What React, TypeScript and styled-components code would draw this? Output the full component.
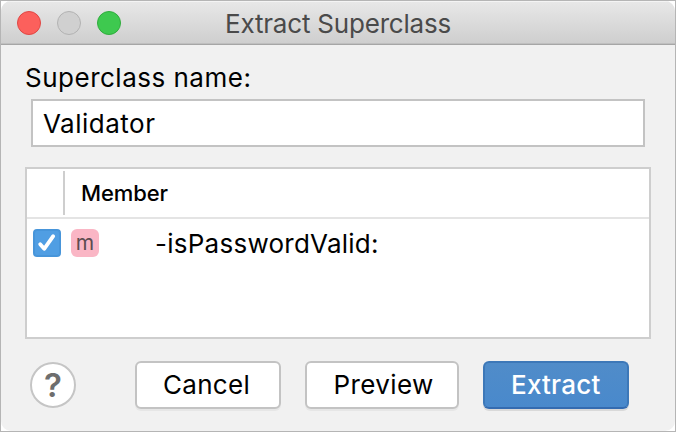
import React from "react";
import styled, { createGlobalStyle } from "styled-components";

const GlobalStyle = createGlobalStyle`
  * { box-sizing: border-box; }
  html, body { margin: 0; background: #fff; }
  body { font-family: Inter, "Liberation Sans", sans-serif; color: #000; font-size: 26px; }
`;

const Frame = styled.div`
  width: 676px;
  height: 432px;
  border: 1px solid #b5b5b5;
  background: #fff;
  overflow: hidden;
`;

const Dialog = styled.main`
  height: 430px;
  border-radius: 10px;
  background: #f1f1f1;
  overflow: hidden;
`;

const TitleBar = styled.header`
  height: 44px;
  display: grid;
  grid-template-columns: 224px 1fr;
  background: linear-gradient(#e8e8e8, #cecece);
  border-bottom: 1px solid #a6a6a6;
  box-shadow: inset 0 1px #f4f4f4, inset 0 -1px #bfbfbf;
`;

const Lights = styled.div`
  display: flex;
  gap: 16px;
  padding: 10px 0 0 16px;
`;

const Light = styled.span<{ $fill: string; $edge: string }>`
  width: 24px;
  height: 24px;
  border-radius: 50%;
  background: ${(p) => p.$fill};
  border: 1px solid ${(p) => p.$edge};
`;

const Title = styled.h1`
  margin: 0;
  font-size: 26px;
  font-weight: 400;
  line-height: 45px;
  letter-spacing: -0.2px;
  color: #4a4a4a;
  white-space: nowrap;
`;

const Label = styled.label`
  display: block;
  height: 54px;
  padding: 17px 0 0 24px;
  line-height: 32px;
  letter-spacing: 0.5px;
`;

const NameField = styled.div`
  width: 614px;
  height: 48px;
  margin-left: 30px;
  padding-left: 10px;
  border: 2px solid #c3c3c3;
  background: #fff;
  line-height: 45px;
  letter-spacing: 0.5px;
`;

const Table = styled.section`
  width: 626px;
  height: 172px;
  margin: 20px 0 0 24px;
  border: 2px solid #cecece;
  background: #fff;
`;

const TableHead = styled.div`
  height: 50px;
  display: grid;
  grid-template-columns: 38px 1fr;
  padding-top: 2px;
  border-bottom: 2px solid #e4e4e4;
`;

const HeadCell = styled.div`
  height: 44px;
  padding-left: 16px;
  font-size: 22px;
  font-weight: 450;
  line-height: 45px;
  letter-spacing: -0.1px;
`;

const SelectHead = styled.div`
  height: 44px;
  border-right: 2px solid #cecece;
`;

const MemberRow = styled.div`
  display: flex;
  padding: 10px 0 0 6px;
`;

const CheckBox = styled.span`
  width: 28px;
  height: 28px;
  border: 2px solid #4795da;
  border-radius: 4px;
  background: #509ee3;
  svg { display: block; }
`;

const MethodBadge = styled.span`
  width: 28px;
  height: 28px;
  margin-left: 10px;
  border-radius: 6px;
  background: #fab6c5;
  color: #5d4c50;
  font-size: 21px;
  line-height: 28px;
  text-align: center;
`;

const MemberName = styled.span`
  margin-left: 56px;
  line-height: 30px;
  letter-spacing: 0.25px;
`;

const Actions = styled.footer`
  display: flex;
  gap: 24px;
  padding: 22px 0 0 29px;
`;

const HelpButton = styled.button`
  width: 46px;
  height: 46px;
  margin: 1px 35px 0 0;
  padding: 0;
  border: 2px solid #c5c5c5;
  border-radius: 50%;
  background: #fff;
  color: #6e6e6e;
  font: 600 33px/42px Inter, sans-serif;
`;

const Button = styled.button<{ $width: number; $primary?: boolean; $tracking: number; $inset: number }>`
  width: ${(p) => p.$width}px;
  height: 48px;
  padding: 0 0 1px ${(p) => p.$inset}px;
  border: 2px solid ${(p) => (p.$primary ? "#3d78b8" : "#c3c3c3")};
  ${(p) => p.$primary && "border-bottom-color: #346bb0;"}
  border-radius: 6px;
  background: ${(p) => (p.$primary ? "linear-gradient(#508cc9, #4989cc)" : "#fff")};
  box-shadow: 0 2px ${(p) => (p.$primary ? "#d9d9d9" : "#e6e6e6")};
  color: ${(p) => (p.$primary ? "#fff" : "#000")};
  font: ${(p) => (p.$primary ? 500 : 400)} 26px/43px Inter, sans-serif;
  letter-spacing: ${(p) => p.$tracking}px;
  text-align: left;
`;

export default function App() {
  return (
    <>
      <GlobalStyle />
      <Frame>
        <Dialog>
          <TitleBar>
            <Lights>
              <Light $fill="#fc605c" $edge="#df4744" />
              <Light $fill="#d0d0d0" $edge="#b2b2b2" />
              <Light $fill="#3ec94f" $edge="#30ac3d" />
            </Lights>
            <Title>Extract Superclass</Title>
          </TitleBar>
          <Label>Superclass name:</Label>
          <NameField>Validator</NameField>
          <Table>
            <TableHead>
              <SelectHead />
              <HeadCell>Member</HeadCell>
            </TableHead>
            <MemberRow>
              <CheckBox>
                <svg width="24" height="24" viewBox="0 0 24 24" fill="none" stroke="#fff" strokeWidth="3.8" strokeLinecap="round" strokeLinejoin="round">
                  <path d="M5.2 13.2 9.2 17.8 18.2 5.2" />
                </svg>
              </CheckBox>
              <MethodBadge>m</MethodBadge>
              <MemberName>-isPasswordValid:</MemberName>
            </MemberRow>
          </Table>
          <Actions>
            <HelpButton>?</HelpButton>
            <Button $width={146} $tracking={0.3} $inset={26}>Cancel</Button>
            <Button $width={154} $tracking={0.4} $inset={26.5}>Preview</Button>
            <Button $width={146} $tracking={0.2} $inset={26} $primary>Extract</Button>
          </Actions>
        </Dialog>
      </Frame>
    </>
  );
}
